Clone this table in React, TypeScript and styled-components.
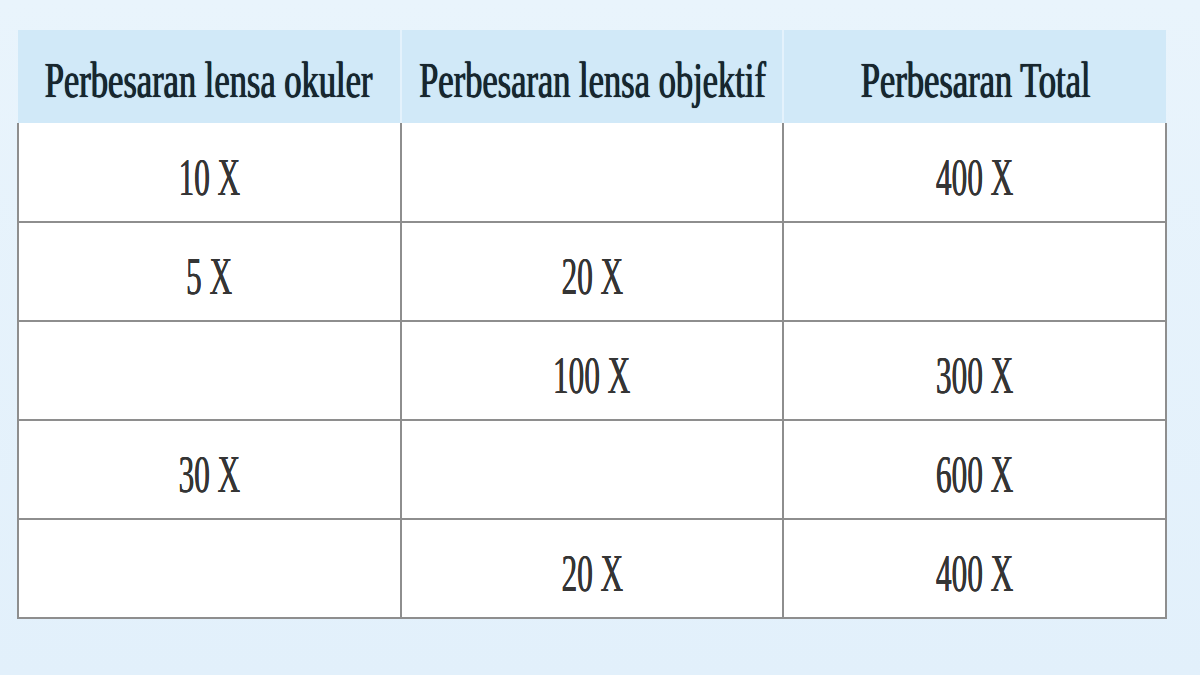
import * as React from 'react';
import styled, { createGlobalStyle } from 'styled-components';

const GlobalStyle = createGlobalStyle`
  html, body {
    margin: 0;
    padding: 0;
    background: #e4f1fb;
  }
  #root {
    width: 1200px;
    height: 675px;
  }
`;

const encabezados = [
  'Perbesaran lensa okuler',
  'Perbesaran lensa objektif',
  'Perbesaran Total',
];

const filas = [
  ['10 X', '', '400 X'],
  ['5 X', '20 X', ''],
  ['', '100 X', '300 X'],
  ['30 X', '', '600 X'],
  ['', '20 X', '400 X'],
];

export default function App() {
  return (
    <>
      <GlobalStyle />
      <Pagina>
        <Tabla>
          <thead>
            <tr>
              {encabezados.map((h, i) => (
                <CeldaEncabezado key={i} ultima={i === encabezados.length - 1}>
                  <Centro>
                    <TextoEncabezado>{h}</TextoEncabezado>
                  </Centro>
                </CeldaEncabezado>
              ))}
            </tr>
          </thead>
          <tbody>
            {filas.map((fila, r) => (
              <tr key={r}>
                {fila.map((valor, c) => (
                  <Celda key={c} primera={r === 0}>
                    <Centro>
                      <TextoCelda>{valor}</TextoCelda>
                    </Centro>
                  </Celda>
                ))}
              </tr>
            ))}
          </tbody>
        </Tabla>
      </Pagina>
    </>
  );
}

const Pagina = styled.div`
  width: 1200px;
  height: 675px;
  box-sizing: border-box;
  padding: 30px 0 0 17px;
  background: linear-gradient(180deg, #e9f4fc 0%, #e2f0fb 100%);
`;

const Tabla = styled.table`
  border-collapse: collapse;
  table-layout: fixed;
  width: 1150px;
`;

const Centro = styled.div`
  display: flex;
  justify-content: center;
  align-items: center;
`;

const CeldaEncabezado = styled.th<{ ultima?: boolean }>`
  height: 93px;
  padding: 6px 0 0 0;
  box-sizing: border-box;
  background: #d1e9f8;
  border-right: ${({ ultima }) => (ultima ? 'none' : '2px solid #e4f2fc')};
  font-weight: normal;
  vertical-align: middle;
`;

const TextoEncabezado = styled.span`
  display: inline-block;
  flex: none;
  white-space: nowrap;
  font-family: "Liberation Serif", "Times New Roman", serif;
  font-size: 50px;
  font-weight: normal;
  line-height: 1;
  color: #18262e;
  transform: scaleX(0.69);
  text-shadow: 0 0 1px #18262e, 0.8px 0 0 #18262e;
`;

const Celda = styled.td<{ primera?: boolean }>`
  height: 99px;
  padding: 10px 0 0 0;
  box-sizing: border-box;
  background: #ffffff;
  border: 2px solid #8e8e8e;
  border-top: ${({ primera }) => (primera ? 'none' : '2px solid #8e8e8e')};
  vertical-align: middle;
`;

const TextoCelda = styled.span`
  display: inline-block;
  flex: none;
  white-space: nowrap;
  font-family: "Liberation Serif", "Times New Roman", serif;
  font-size: 53px;
  line-height: 1;
  color: #353535;
  transform: scaleX(0.59);
  text-shadow: 0.6px 0 0 #353535, 0 0 0.8px #555555;
`;
